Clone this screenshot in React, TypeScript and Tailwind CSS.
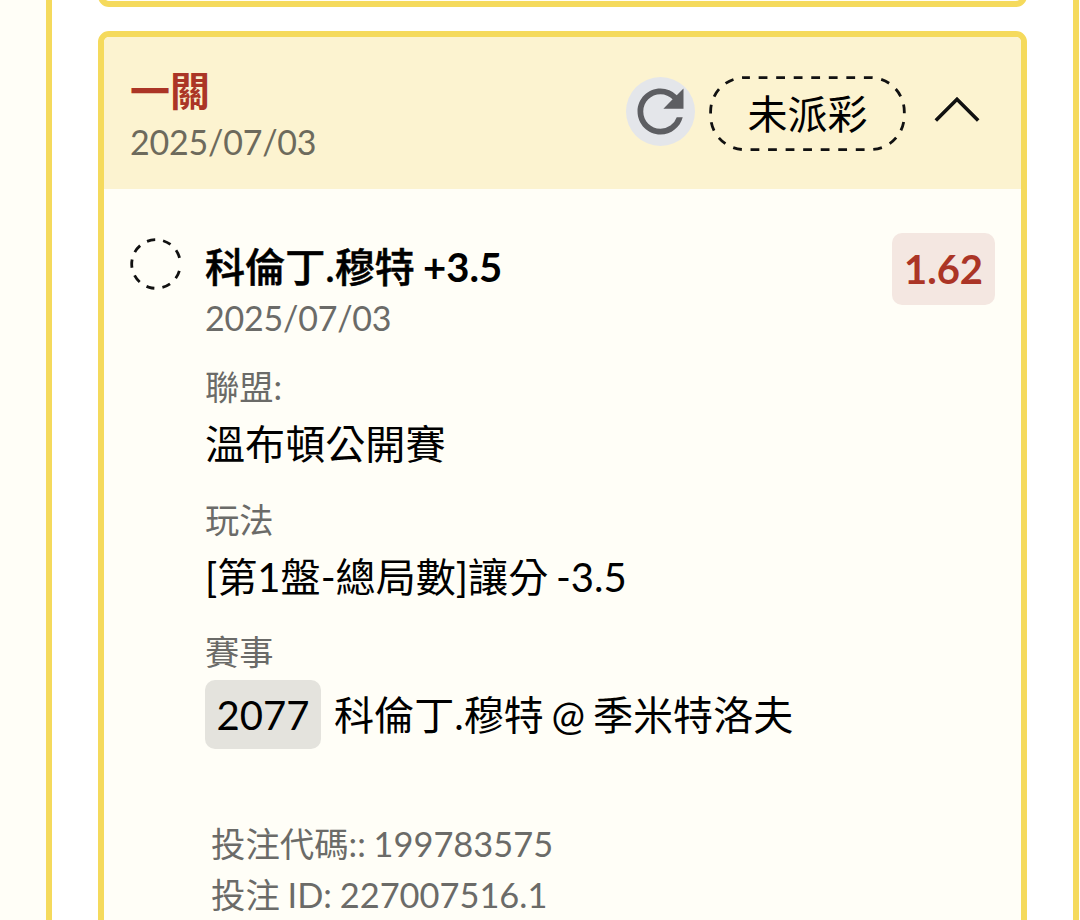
import { useState } from 'react'
import type { ReactNode } from 'react'
import { MdRefresh } from 'react-icons/md'

type Bet = {
  title: string
  date: string
  status: string
  player: string
  handicap: string
  odds: string
  league: string
  play: string
  matchNo: string
  match: string
  code: string
  id: string
}

const BET: Bet = {
  title: '一關',
  date: '2025/07/03',
  status: '未派彩',
  player: '科倫丁.穆特',
  handicap: '+3.5',
  odds: '1.62',
  league: '溫布頓公開賽',
  play: '[第1盤-總局數]讓分 -3.5',
  matchNo: '2077',
  match: '科倫丁.穆特 @ 季米特洛夫',
  code: '199783575',
  id: '227007516.1',
}

// 虛線膠囊：未派彩狀態
function StatusPill({ children }: { children: ReactNode }) {
  return (
    <div className="relative flex h-[75px] w-[197px] items-center justify-center text-[40px] leading-[56px] text-black">
      <svg className="absolute inset-0" width="197" height="75" fill="none">
        <rect
          x="1.6"
          y="1.6"
          width="193.7"
          height="72"
          rx="34"
          stroke="#111"
          strokeWidth="2.8"
          strokeDasharray="8.8 8.74"
          strokeDashoffset="3.5"
        />
      </svg>
      <span>{children}</span>
    </div>
  )
}

function PendingCircle() {
  return (
    <svg className="shrink-0" width="52" height="52" viewBox="-26 -26 52 52" fill="none">
      <circle
        r="24.3"
        stroke="#111"
        strokeWidth="2.8"
        strokeDasharray="8.3 8 8.3 8 8.3 8 8.3 8 8.3 8 8.3 8 8.3 8 8.3 8 8.3 14.3"
        transform="rotate(16.2)"
      />
    </svg>
  )
}

function Field({ label, children }: { label: string; children: ReactNode }) {
  return (
    <div className="mt-[19px]">
      <div className="text-[34.3px] leading-[50px] text-[#6b6b68]">{label}</div>
      <div className="text-[40.1px] leading-[63.5px] text-black">{children}</div>
    </div>
  )
}

function BetCard({ bet }: { bet: Bet }) {
  const [open, setOpen] = useState(true)

  return (
    <div className="h-[960px] overflow-hidden rounded-[11px] border-[6px] border-[#f5da5c] bg-[#fffef7]">
      {/* 標題列 */}
      <div className="flex h-[152px] bg-[#fcf3d0] pl-[26px] pr-[41px]">
        <div className="flex-1 pt-[28px]">
          <div className="text-[40px] font-bold leading-[52px] text-[#ab3526]">{bet.title}</div>
          <div className="text-[34px] leading-[50px] tracking-[-0.22px] text-[#6d6a5c]">{bet.date}</div>
        </div>
        <div className="mt-[39px] flex h-[75px] items-center">
          <button className="mr-[14px] flex size-[69px] -translate-y-[2px] items-center justify-center rounded-full bg-[#e4e6ea] text-[#5d5e62]">
            <MdRefresh size={69} />
          </button>
          <StatusPill>{bet.status}</StatusPill>
          <button className="ml-[28px]" onClick={() => setOpen(!open)}>
            <svg width="46" height="28" fill="none" className="-translate-y-[4px]">
              <path d="M1.8 24.6 23 3.2l21.2 21.4" stroke="#111" strokeWidth="3.6" />
            </svg>
          </button>
        </div>
      </div>

      {/* 內容 */}
      {open && (
        <div className="flex pl-[26px] pr-[26px] pt-[44px]">
          <div className="pt-[5px]">
            <PendingCircle />
          </div>
          <div className="ml-[23px] flex-1 pt-[8px]">
            <div className="text-[40.1px] font-medium leading-[52px] text-black [word-spacing:-2px]">
              <span className="[-webkit-text-stroke:0.5px_black]">{bet.player}</span>{' '}
              <span className="font-bold">{bet.handicap}</span>
            </div>
            <div className="text-[34px] leading-[50px] tracking-[-0.22px] text-[#6b6b68]">{bet.date}</div>
            <div className="[word-spacing:-2.5px]">
              <Field label="聯盟:">{bet.league}</Field>
              <Field label="玩法">{bet.play}</Field>
              <Field label="賽事">
                <div className="flex items-center pt-[3px]">
                  <span className="mr-[13px] flex h-[69px] w-[116px] items-center justify-center rounded-[10px] bg-[#e4e3dd]">
                    {bet.matchNo}
                  </span>
                  {bet.match}
                </div>
              </Field>
              <div className="ml-[6px] mt-[69px] text-[34.4px] leading-[51px] text-[#6b6b68] [word-spacing:-1px]">
                <div>投注代碼:: {bet.code}</div>
                <div>投注 ID: {bet.id}</div>
              </div>
            </div>
          </div>
          <div className="flex h-[72px] w-[103px] items-center justify-center rounded-[10px] bg-[#f4e7e1] text-[40px] font-bold text-[#ab3526]">
            {bet.odds}
          </div>
        </div>
      )}
    </div>
  )
}

export default function App() {
  return (
    <div
      className="flex h-[920px] w-[1080px] overflow-hidden bg-[#fffef7] pl-[46px] pr-[1px]"
      style={{ fontFamily: "Lato, 'Noto Sans CJK TC', sans-serif" }}
    >
      <div className="h-[920px] flex-1 border-x-[6px] border-[#f5da5c] bg-white pl-[46px] pr-[46px]">
        {/* 上一張注單的底邊 */}
        <div className="mb-[24px] h-[7px] overflow-hidden">
          <div className="-mt-[33px] h-[40px] rounded-[11px] border-[6px] border-[#f5da5c] bg-[#fffef7]" />
        </div>
        <BetCard bet={BET} />
      </div>
    </div>
  )
}
